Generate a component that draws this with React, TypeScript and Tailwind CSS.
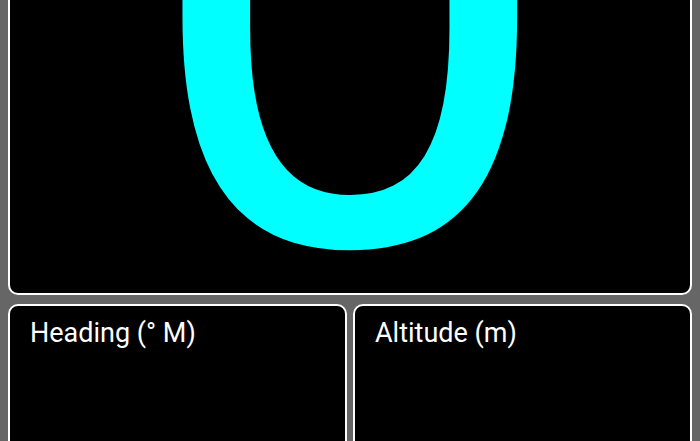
const font = { fontFamily: 'Roboto, "Noto Sans", sans-serif' };

function Gauge({ label }: { label: string }) {
  return (
    <div className="h-[220px] rounded-[10px] border-2 border-white bg-black pl-[20px] pt-[12px]">
      <p className="text-[27px] leading-[30px] text-white">{label}</p>
    </div>
  );
}

export default function App() {
  return (
    <div className="h-[441px] overflow-hidden bg-[#666666]" style={font}>
      {/* dashboard is scrolled so the speed readout's top is off screen */}
      <div className="-mt-[305px] flex flex-col gap-[9px] px-2">
        {/* Main readout */}
        <div className="flex h-[600px] flex-col items-center justify-end overflow-hidden rounded-[10px] border-2 border-white bg-black">
          <span className="text-[745px] leading-[608px] text-[#00ffff]">0</span>
        </div>

        {/* Secondary readouts */}
        <div className="grid grid-cols-2 gap-[6px]">
          <Gauge label="Heading (° M)" />
          <Gauge label="Altitude (m)" />
        </div>
      </div>
    </div>
  );
}
